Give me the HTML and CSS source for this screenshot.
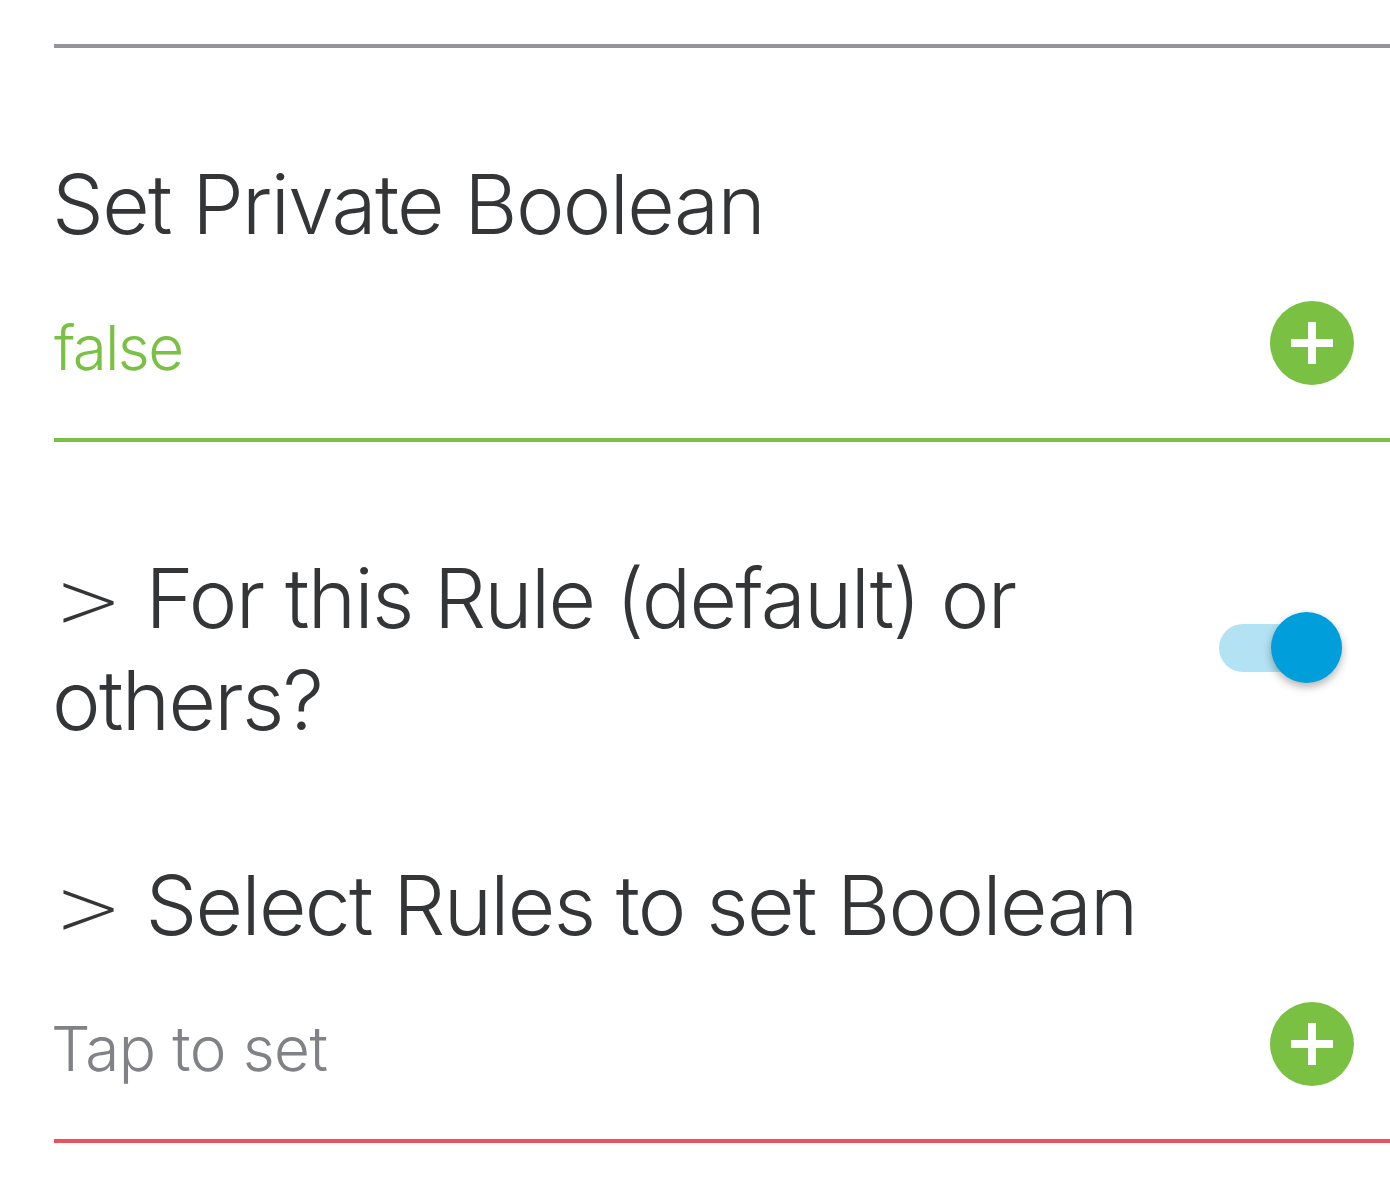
FILE: index.html
```html
<!DOCTYPE html>
<html lang="en">
<head>
<meta charset="utf-8">
<title>Set Private Boolean</title>
<link rel="stylesheet" href="styles.css">
</head>
<body>
<main class="form">
  <section class="field field-first">
    <h2 class="label">Set Private Boolean</h2>
    <div class="value-row border-green">
      <span class="value value-set">false</span>
      <button class="add" aria-label="Add"><svg viewBox="0 0 84 84" width="84" height="84"><path d="M38 21h8v17h17v8H46v17h-8V46H21v-8h17z" fill="#fff"/></svg></button>
    </div>
  </section>
  <section class="toggle-row">
    <h2 class="label label-wrap"><span class="gt">&gt;</span> For this Rule (default) or others?</h2>
    <div class="switch"><span class="knob"></span></div>
  </section>
  <section class="field field-last">
    <h2 class="label"><span class="gt">&gt;</span> Select Rules to set Boolean</h2>
    <div class="value-row border-red">
      <span class="value value-empty">Tap to set</span>
      <button class="add" aria-label="Add"><svg viewBox="0 0 84 84" width="84" height="84"><path d="M38 21h8v17h17v8H46v17h-8V46H21v-8h17z" fill="#fff"/></svg></button>
    </div>
  </section>
</main>
</body>
</html>
```
FILE: styles.css
```css
* { box-sizing: border-box; }
html, body { margin: 0; background: #fff; }
body { height: 1197px; overflow: hidden; font-family: Inter, "Liberation Sans", sans-serif; font-weight: 300; color: #333537; }
.form { padding: 44px 0 0 54px; }
.field-first { border-top: 4px solid #939598; padding-top: 107px; }
.label { margin: 0 0 0 -2px; font-size: 82px; line-height: 100px; font-weight: 300; letter-spacing: -1.65px; }
.value-row { display: flex; justify-content: space-between; align-items: center; padding-right: 36px; border-bottom: 4px solid; margin-top: 48px; height: 139px; padding-bottom: 55px; }
.border-green { border-color: #7ac143; }
.border-red { border-color: #e8525f; }
.value { margin-top: 10px; font-size: 62px; line-height: 84px; }
.value-set { color: #7ac143; letter-spacing: -1.7px; }
.value-empty { margin-left: -3px; color: #808285; letter-spacing: -0.6px; }
.add { display: block; width: 84px; height: 84px; padding: 0; border: 0; border-radius: 50%; background: #7ac143; }
.add svg { display: block; }
.toggle-row { display: flex; justify-content: space-between; align-items: center; padding: 106px 48px 0 0; }
.label-wrap { width: 1000px; line-height: 102px; }
.gt { margin: 0 2px 0 3px; font-family: "DejaVu Sans", sans-serif; font-weight: 200; font-size: 80px; line-height: 0; letter-spacing: 0; }
.switch { position: relative; width: 123px; height: 48px; margin-top: -4px; border-radius: 24px; background: #b2e2f4; }
.knob { position: absolute; right: 0; top: -12px; width: 71px; height: 71px; border-radius: 50%; background: #009fdb; box-shadow: 0 4px 8px rgba(0,0,0,.3); }
.field-last { padding-top: 104px; }
```
